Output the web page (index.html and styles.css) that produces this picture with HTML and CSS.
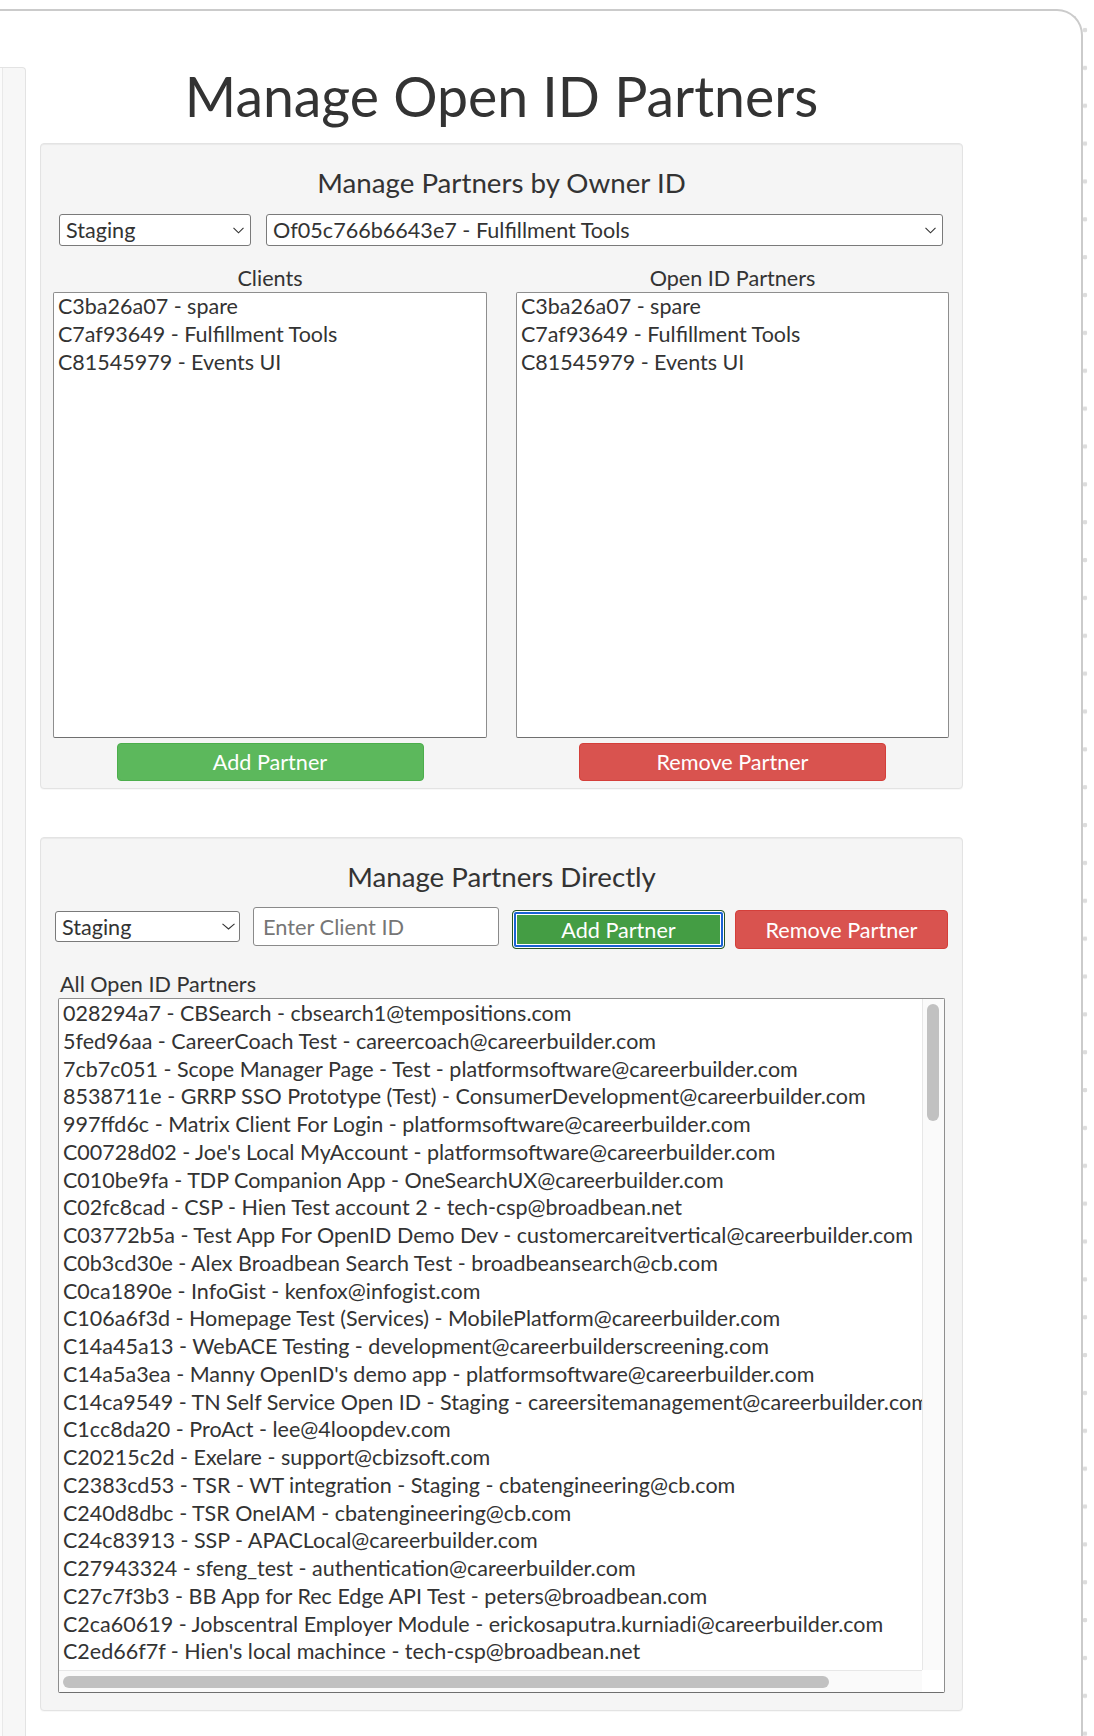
FILE: index.html
```html
<!DOCTYPE html>
<html lang="en">
<head>
<meta charset="utf-8">
<title>Manage Open ID Partners</title>
<link rel="stylesheet" href="styles.css">
</head>
<body>
<div class="page">
  <div class="frame">
    <aside class="sidebar"></aside>
    <main class="content">
      <h1 class="title">Manage Open ID Partners</h1>

      <section class="well panel-owner">
        <h2 class="panel-title">Manage Partners by Owner ID</h2>
        <div class="owner-selects">
          <div class="select-wrap env">
            <select class="select"><option>Staging</option></select>
            <svg class="chev" width="11" height="7" viewBox="0 0 11 7"><polyline points="0.5,0.8 5.5,5.8 10.5,0.8" fill="none" stroke="#333" stroke-width="1.1"/></svg>
          </div>
          <div class="select-wrap owner">
            <select class="select"><option>Of05c766b6643e7 - Fulfillment Tools</option></select>
            <svg class="chev" width="11" height="7" viewBox="0 0 11 7"><polyline points="0.5,0.8 5.5,5.8 10.5,0.8" fill="none" stroke="#333" stroke-width="1.1"/></svg>
          </div>
        </div>
        <div class="columns">
          <div class="col">
            <div class="col-label">Clients</div>
            <div class="listbox" role="listbox">
              <div class="option">C3ba26a07 - spare</div>
              <div class="option">C7af93649 - Fulfillment Tools</div>
              <div class="option">C81545979 - Events UI</div>
            </div>
            <button class="btn btn-success">Add Partner</button>
          </div>
          <div class="col">
            <div class="col-label">Open ID Partners</div>
            <div class="listbox" role="listbox">
              <div class="option">C3ba26a07 - spare</div>
              <div class="option">C7af93649 - Fulfillment Tools</div>
              <div class="option">C81545979 - Events UI</div>
            </div>
            <button class="btn btn-danger">Remove Partner</button>
          </div>
        </div>
      </section>

      <section class="well panel-direct">
        <h2 class="panel-title">Manage Partners Directly</h2>
        <div class="direct-row">
          <div class="select-wrap env2">
            <select class="select"><option>Staging</option></select>
            <svg class="chev" width="13" height="7" viewBox="0 0 13 7"><polyline points="0.5,0.8 6.5,6 12.5,0.8" fill="none" stroke="#333" stroke-width="1.1"/></svg>
          </div>
          <input class="client-input" type="text" placeholder="Enter Client ID">
          <button class="btn btn-success btn-focus">Add Partner</button>
          <button class="btn btn-danger btn-direct">Remove Partner</button>
        </div>
        <div class="all-label">All Open ID Partners</div>
        <div class="biglist" role="listbox">
          <div class="viewport">
            <div class="rows">
              <div class="option">028294a7 - CBSearch - cbsearch1@tempositions.com</div>
              <div class="option">5fed96aa - CareerCoach Test - careercoach@careerbuilder.com</div>
              <div class="option">7cb7c051 - Scope Manager Page - Test - platformsoftware@careerbuilder.com</div>
              <div class="option">8538711e - GRRP SSO Prototype (Test) - ConsumerDevelopment@careerbuilder.com</div>
              <div class="option">997ffd6c - Matrix Client For Login - platformsoftware@careerbuilder.com</div>
              <div class="option">C00728d02 - Joe's Local MyAccount - platformsoftware@careerbuilder.com</div>
              <div class="option">C010be9fa - TDP Companion App - OneSearchUX@careerbuilder.com</div>
              <div class="option">C02fc8cad - CSP - Hien Test account 2 - tech-csp@broadbean.net</div>
              <div class="option">C03772b5a - Test App For OpenID Demo Dev - customercareitvertical@careerbuilder.com</div>
              <div class="option">C0b3cd30e - Alex Broadbean Search Test - broadbeansearch@cb.com</div>
              <div class="option">C0ca1890e - InfoGist - kenfox@infogist.com</div>
              <div class="option">C106a6f3d - Homepage Test (Services) - MobilePlatform@careerbuilder.com</div>
              <div class="option">C14a45a13 - WebACE Testing - development@careerbuilderscreening.com</div>
              <div class="option">C14a5a3ea - Manny OpenID's demo app - platformsoftware@careerbuilder.com</div>
              <div class="option">C14ca9549 - TN Self Service Open ID - Staging - careersitemanagement@careerbuilder.com</div>
              <div class="option">C1cc8da20 - ProAct - lee@4loopdev.com</div>
              <div class="option">C20215c2d - Exelare - support@cbizsoft.com</div>
              <div class="option">C2383cd53 - TSR - WT integration - Staging - cbatengineering@cb.com</div>
              <div class="option">C240d8dbc - TSR OneIAM - cbatengineering@cb.com</div>
              <div class="option">C24c83913 - SSP - APACLocal@careerbuilder.com</div>
              <div class="option">C27943324 - sfeng_test - authentication@careerbuilder.com</div>
              <div class="option">C27c7f3b3 - BB App for Rec Edge API Test - peters@broadbean.com</div>
              <div class="option">C2ca60619 - Jobscentral Employer Module - erickosaputra.kurniadi@careerbuilder.com</div>
              <div class="option">C2ed66f7f - Hien's local machince - tech-csp@broadbean.net</div>
            </div>
          </div>
          <div class="vscroll"><div class="thumb thumb-v"></div></div>
          <div class="hscroll"><div class="thumb thumb-h"></div></div>
          <div class="corner"></div>
        </div>
      </section>
    </main>
  </div>
  <div class="edge"></div>
</div>
</body>
</html>
```

FILE: styles.css
```css
* { box-sizing: border-box; }

html, body {
  margin: 0;
  background: #fff;
}

body {
  font-family: Lato, "Open Sans", "Liberation Sans", sans-serif;
  color: #333;
}

.page {
  display: flex;
  height: 1736px;
  overflow: hidden;
}

.frame {
  flex: 0 0 1083px;
  margin-top: 9px;
  border-top: 2px solid #cbcbcb;
  border-right: 2px solid #cbcbcb;
  border-top-right-radius: 26px;
  display: flex;
  align-items: flex-start;
  padding-top: 56px;
}

.sidebar {
  flex: 0 0 26px;
  align-self: stretch;
  background: linear-gradient(to right, #fbfbfb 0 2px, #e9e9e9 2px 3px, #f7f7f7 3px);
  border: 1px solid #e3e3e3;
  border-left: 0;
  border-bottom: 0;
  border-radius: 0 4px 0 0;
}

.content {
  margin-left: 14px;
  width: 923px;
}

.title {
  margin: 0 0 18px;
  font-size: 55.4px;
  line-height: 58px;
  font-weight: 400;
  text-align: center;
  color: #333;
}

.well {
  background: #f5f5f5;
  border: 1px solid #e3e3e3;
  border-radius: 4px;
  box-shadow: inset 0 1px 1px rgba(0, 0, 0, 0.05), 0 1px 1px rgba(0, 0, 0, 0.03);
}

.panel-owner {
  padding: 24px 0 7px;
}

.panel-direct {
  margin-top: 48px;
  padding: 24px 0 17px;
}

.panel-title {
  margin: 0;
  font-size: 27.7px;
  line-height: 29px;
  font-weight: 400;
  text-align: center;
}

.owner-selects {
  display: flex;
  gap: 15px;
  margin: 17px 19px 0 18px;
}

.select-wrap {
  position: relative;
}

.select-wrap.env { flex: 0 0 192px; }
.select-wrap.owner { flex: 1; }

.select {
  appearance: none;
  -webkit-appearance: none;
  display: block;
  width: 100%;
  height: 32px;
  margin: 0;
  padding: 0 26px 0 6px;
  font-family: Lato, "Open Sans", sans-serif;
  font-size: 21.6px;
  color: #333;
  background: #fff;
  border: 1px solid #7a7a7a;
  border-radius: 3px;
}

.chev {
  position: absolute;
  right: 7px;
  top: 13px;
}

.columns {
  display: grid;
  grid-template-columns: 434px 433px;
  column-gap: 29px;
  margin: 19px 13px 0 12px;
}

.col {
  display: flex;
  flex-direction: column;
  align-items: center;
}

.col-label {
  font-size: 21.6px;
  line-height: 26px;
}

.listbox {
  width: 100%;
  height: 446px;
  margin-top: 1px;
  padding: 0 4px;
  background: #fff;
  border: 1px solid #8e8e8e;
  border-bottom-color: #6f6f6f;
  border-radius: 2px;
}

.option {
  font-size: 21.5px;
  line-height: 27.75px;
  white-space: nowrap;
  color: #333;
}

.btn {
  display: block;
  width: 307px;
  height: 38px;
  margin-top: 5px;
  padding: 0;
  font-family: Lato, "Open Sans", sans-serif;
  font-size: 21.6px;
  color: #fff;
  border: 1px solid;
  border-radius: 4px;
}

.btn-success {
  background: #5cb85c;
  border-color: #4cae4c;
}

.btn-danger {
  background: #d9534f;
  border-color: #d43f3a;
}

.direct-row {
  display: flex;
  align-items: flex-start;
  height: 42px;
  margin: 16px 14px 0;
}

.select-wrap.env2 {
  flex: 0 0 185px;
  margin-top: 4px;
}

.select-wrap.env2 .select {
  height: 31px;
}

.select-wrap.env2 .chev {
  right: 5px;
  top: 12px;
}

.client-input {
  flex: 0 0 246px;
  width: 246px;
  min-width: 0;
  height: 39px;
  margin: 0 0 0 13px;
  padding: 0 9px;
  font-family: Lato, "Open Sans", sans-serif;
  font-size: 21.8px;
  color: #333;
  background: #fff;
  border: 1px solid #8a8a8a;
  border-radius: 3px;
}

.client-input::placeholder {
  color: #767676;
}

.direct-row .btn {
  flex: 0 0 213px;
  width: 213px;
  min-width: 0;
  height: 39px;
  margin-top: 3px;
}

.btn-focus {
  margin-left: 13px;
  background: #449d44;
  border-color: #255625;
  box-shadow: inset 0 0 0 1px #fff, inset 0 0 0 3px #1a62d4, inset 0 0 0 4px #fff;
}

.btn-direct {
  margin-left: 10px;
}

.all-label {
  margin: 22px 0 0 19px;
  font-size: 21.6px;
  line-height: 26px;
}

.biglist {
  display: grid;
  grid-template-columns: 1fr 22px;
  grid-template-rows: 1fr 22px;
  height: 695px;
  margin: 1px 17px 0;
  background: #fff;
  border: 1px solid #8e8e8e;
  border-bottom-color: #6f6f6f;
  border-radius: 2px;
}

.viewport {
  overflow: hidden;
  min-width: 0;
}

.rows {
  width: 960px;
  padding: 1px 0 0 4px;
}

.vscroll {
  background: #fafafa;
  border-left: 1px solid #e7e7e7;
  padding: 5px 4px 0 4px;
}

.hscroll {
  background: #fafafa;
  border-top: 1px solid #e7e7e7;
  padding: 5px 0 0 4px;
}

.corner {
  background: #fff;
}

.thumb {
  background: #c1c1c1;
  border-radius: 6px;
}

.thumb-v {
  width: 12px;
  height: 117px;
}

.thumb-h {
  width: 766px;
  height: 12px;
}

.edge {
  flex: 1;
  background-image: radial-gradient(circle at 2px 19px, #dcdcdc 0 2px, transparent 2.6px);
  background-size: 11px 37.86px;
  background-position: 0 11px;
}
```
